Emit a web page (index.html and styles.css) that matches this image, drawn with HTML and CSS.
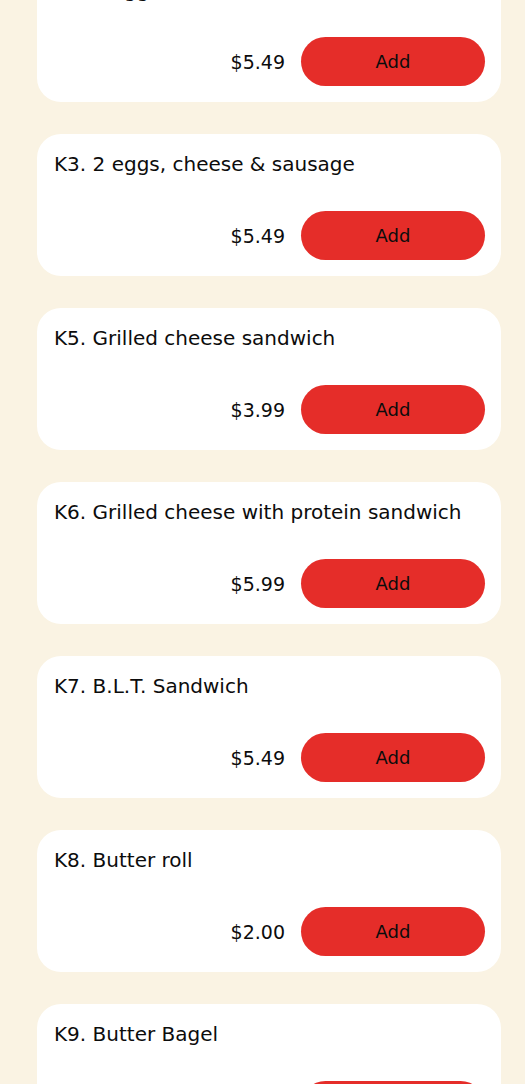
FILE: index.html
```html
<!DOCTYPE html>
<html lang="en">
<head>
    <meta charset="UTF-8">
    <meta name="viewport" content="width=device-width, initial-scale=1.0">
    <title>Breakfast Menu</title>
    <link rel="stylesheet" href="styles.css">
</head>
<body>
    <main class="menu-list">
        <!-- Menu items -->
        <div class="menu-item">
            <p class="item-name">K2. 2 eggs &amp; cheese</p>
            <div class="item-footer">
                <span class="item-price">$5.49</span>
                <button class="add-btn">Add</button>
            </div>
        </div>
        <div class="menu-item">
            <p class="item-name">K3. 2 eggs, cheese &amp; sausage</p>
            <div class="item-footer">
                <span class="item-price">$5.49</span>
                <button class="add-btn">Add</button>
            </div>
        </div>
        <div class="menu-item">
            <p class="item-name">K5. Grilled cheese sandwich</p>
            <div class="item-footer">
                <span class="item-price">$3.99</span>
                <button class="add-btn">Add</button>
            </div>
        </div>
        <div class="menu-item">
            <p class="item-name">K6. Grilled cheese with protein sandwich</p>
            <div class="item-footer">
                <span class="item-price">$5.99</span>
                <button class="add-btn">Add</button>
            </div>
        </div>
        <div class="menu-item">
            <p class="item-name">K7. B.L.T. Sandwich</p>
            <div class="item-footer">
                <span class="item-price">$5.49</span>
                <button class="add-btn">Add</button>
            </div>
        </div>
        <div class="menu-item">
            <p class="item-name">K8. Butter roll</p>
            <div class="item-footer">
                <span class="item-price">$2.00</span>
                <button class="add-btn">Add</button>
            </div>
        </div>
        <div class="menu-item">
            <p class="item-name">K9. Butter Bagel</p>
            <div class="item-footer">
                <span class="item-price">$1.99</span>
                <button class="add-btn">Add</button>
            </div>
        </div>
    </main>
</body>
</html>
```

FILE: styles.css
```css
/* General Reset */
* {
    margin: 0;
    padding: 0;
    box-sizing: border-box;
}

body {
    font-family: "DejaVu Sans", Arial, sans-serif;
    background-color: #faf3e3;
    color: #0c0c0c;
    overflow: hidden;
}

/* List is shown scrolled part way down */
.menu-list {
    display: flex;
    flex-direction: column;
    gap: 32px;
    padding: 0 24px 0 37px;
    margin-top: -40px;
}

.menu-item {
    background-color: #fff;
    border-radius: 24px;
    padding: 16px 16px 16px 17px;
}

.item-name {
    font-size: 20px;
    line-height: 28px;
    margin-bottom: 33px;
}

.item-footer {
    display: flex;
    align-items: center;
    justify-content: flex-end;
    gap: 16px;
}

.item-price {
    font-size: 19px;
}

.add-btn {
    width: 184px;
    height: 49px;
    border: none;
    border-radius: 25px;
    background-color: #e52d29;
    color: #0c0c0c;
    font-family: inherit;
    font-size: 18px;
    cursor: pointer;
}
```
